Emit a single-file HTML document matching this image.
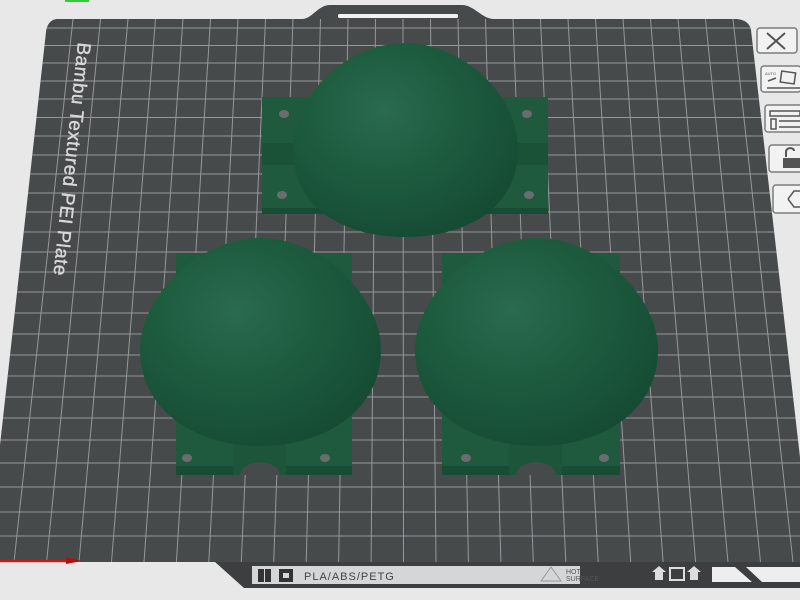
<!DOCTYPE html>
<html><head><meta charset="utf-8"><style>
html,body{margin:0;padding:0;width:800px;height:600px;overflow:hidden;background:#e8e8e8;}
svg{display:block}
text{font-family:"Liberation Sans",sans-serif;}
</style></head><body>
<svg width="800" height="600" viewBox="0 0 800 600" xmlns="http://www.w3.org/2000/svg">
<defs>
<clipPath id="pl"><path d="M58,19 L302,19 C312,19 318,5 330,5 L462,5 C474,5 482,19 494,19 L735,19 C745,19 750,24 751,30 L812,562 L0,562 L0,445 L46,32 C47,24 51,19 58,19 Z"/></clipPath>
<radialGradient id="dg" cx="0.4" cy="0.35" r="0.7">
<stop offset="0" stop-color="#2a6a4e"/><stop offset="0.5" stop-color="#1d5b3f"/><stop offset="1" stop-color="#154b33"/>
</radialGradient>
</defs>
<rect width="800" height="600" fill="#e8e8e8"/>
<rect x="65" y="0" width="24" height="2" fill="#3c3"/>
<g clip-path="url(#pl)">
<rect width="820" height="600" fill="#474a4b"/>
<g stroke="#95989a" stroke-width="1">
<line x1="0" y1="28" x2="820" y2="28"/><line x1="0" y1="45.5" x2="820" y2="45.5"/><line x1="0" y1="63" x2="820" y2="63"/><line x1="0" y1="81" x2="820" y2="81"/><line x1="0" y1="99" x2="820" y2="99"/><line x1="0" y1="117.5" x2="820" y2="117.5"/><line x1="0" y1="136" x2="820" y2="136"/><line x1="0" y1="155" x2="820" y2="155"/><line x1="0" y1="174" x2="820" y2="174"/><line x1="0" y1="193" x2="820" y2="193"/><line x1="0" y1="212" x2="820" y2="212"/><line x1="0" y1="232" x2="820" y2="232"/><line x1="0" y1="252" x2="820" y2="252"/><line x1="0" y1="272" x2="820" y2="272"/><line x1="0" y1="292" x2="820" y2="292"/><line x1="0" y1="313" x2="820" y2="313"/><line x1="0" y1="334" x2="820" y2="334"/><line x1="0" y1="355" x2="820" y2="355"/><line x1="0" y1="376" x2="820" y2="376"/><line x1="0" y1="397" x2="820" y2="397"/><line x1="0" y1="418" x2="820" y2="418"/><line x1="0" y1="440" x2="820" y2="440"/><line x1="0" y1="463" x2="820" y2="463"/><line x1="0" y1="487" x2="820" y2="487"/><line x1="0" y1="512" x2="820" y2="512"/><line x1="0" y1="536" x2="820" y2="536"/>
<line x1="73" y1="19" x2="14" y2="562"/><line x1="100.5" y1="19" x2="46.6" y2="562"/><line x1="128" y1="19" x2="79" y2="562"/><line x1="155.5" y1="19" x2="111.5" y2="562"/><line x1="183" y1="19" x2="144" y2="562"/><line x1="210.5" y1="19" x2="176.4" y2="562"/><line x1="238" y1="19" x2="208.8" y2="562"/><line x1="265.5" y1="19" x2="241.3" y2="562"/><line x1="293" y1="19" x2="273.7" y2="562"/><line x1="320.5" y1="19" x2="306.2" y2="562"/><line x1="348" y1="19" x2="338.6" y2="562"/><line x1="375.5" y1="19" x2="371.1" y2="562"/><line x1="403" y1="19" x2="403.5" y2="562"/><line x1="430.5" y1="19" x2="436" y2="562"/><line x1="458" y1="19" x2="468.4" y2="562"/><line x1="485.5" y1="19" x2="500.9" y2="562"/><line x1="513" y1="19" x2="533.3" y2="562"/><line x1="540.5" y1="19" x2="565.8" y2="562"/><line x1="568" y1="19" x2="598.2" y2="562"/><line x1="595.5" y1="19" x2="630.7" y2="562"/><line x1="623" y1="19" x2="663.1" y2="562"/><line x1="650.5" y1="19" x2="695.6" y2="562"/><line x1="678" y1="19" x2="728" y2="562"/><line x1="705.5" y1="19" x2="760.5" y2="562"/><line x1="733" y1="19" x2="793" y2="562"/>
</g>
</g>
<rect x="338" y="14" width="120" height="4" rx="1.5" fill="#f2f2f2"/>
<text transform="translate(78,42) rotate(96)" font-size="19" fill="#d8d8d8" stroke="#d8d8d8" stroke-width="0.4" letter-spacing="0.5">Bambu Textured PEI Plate</text>

<!-- top object -->
<rect x="262" y="97" width="286" height="117" fill="#1f5a3e"/>
<rect x="262" y="143" width="286" height="22" fill="#1a5238"/>
<rect x="262" y="208" width="286" height="6" fill="#174d35"/>
<ellipse cx="284" cy="114" rx="5" ry="4" fill="#6a6d6e"/><ellipse cx="527" cy="114" rx="5" ry="4" fill="#6a6d6e"/>
<ellipse cx="282" cy="195" rx="5" ry="4" fill="#6a6d6e"/><ellipse cx="529" cy="195" rx="5" ry="4" fill="#6a6d6e"/>
<path d="M293,150 C293,92 350,43 405,43 C460,43 518,92 518,150 C518,205 470,237 405,237 C340,237 293,205 293,150 Z" fill="url(#dg)"/>

<!-- left object -->
<rect x="176" y="253" width="176" height="222" fill="#1f5a3e"/>
<rect x="176" y="466" width="176" height="9" fill="#174d35"/>
<ellipse cx="187" cy="458" rx="5" ry="4" fill="#6a6d6e"/><ellipse cx="325" cy="458" rx="5" ry="4" fill="#6a6d6e"/>
<path d="M233,475 L233,437 L286,437 L286,475 Z" fill="#1c5539"/>
<path d="M240,475 C242,458 278,458 280,475 Z" fill="#474a4b"/>
<path d="M140,350 C140,295 200,238 260,238 C320,238 381,295 381,350 C381,410 325,446 260,446 C195,446 140,410 140,350 Z" fill="url(#dg)"/>

<!-- right object -->
<rect x="442" y="253" width="178" height="222" fill="#1f5a3e"/>
<rect x="442" y="466" width="178" height="9" fill="#174d35"/>
<ellipse cx="466" cy="458" rx="5" ry="4" fill="#6a6d6e"/><ellipse cx="604" cy="458" rx="5" ry="4" fill="#6a6d6e"/>
<path d="M509,475 L509,437 L562,437 L562,475 Z" fill="#1c5539"/>
<path d="M516,475 C518,458 554,458 556,475 Z" fill="#474a4b"/>
<path d="M415,350 C415,295 477,238 537,238 C597,238 658,295 658,350 C658,410 604,446 537,446 C470,446 415,410 415,350 Z" fill="url(#dg)"/>

<!-- red axis -->
<line x1="0" y1="561" x2="72" y2="561" stroke="#c81a1a" stroke-width="2.5"/>
<path d="M66,557 L82,561 L66,564 Z" fill="#b01010"/>

<!-- bottom bar -->
<path d="M215,562 L800,562 L800,588 L244,588 Z" fill="#3c3e3f"/>
<rect x="252" y="566" width="328" height="18" fill="#d4d6d7"/>
<rect x="258" y="569" width="13" height="13" fill="#333"/><rect x="264" y="569" width="1" height="13" fill="#d4d6d7"/>
<rect x="279" y="569" width="14" height="13" fill="#333"/><rect x="283" y="573" width="6" height="5" fill="#d4d6d7"/>
<text x="304" y="580" font-size="11" fill="#444" letter-spacing="1">PLA/ABS/PETG</text>
<path d="M541,581 L551,567 L561,581 Z" fill="none" stroke="#999" stroke-width="1"/>
<text x="566" y="574" font-size="7" fill="#555">HOT</text>
<text x="566" y="581" font-size="7" fill="#555">SURFACE</text>
<path d="M655,580 L655,572 L652,572 L659,566 L666,572 L663,572 L663,580 Z" fill="#ddd"/>
<rect x="670" y="568" width="14" height="12" fill="none" stroke="#ddd" stroke-width="2"/>
<path d="M690,580 L690,572 L687,572 L694,566 L701,572 L698,572 L698,580 Z" fill="#ddd"/>
<path d="M712,567 L735,567 L752,582 L712,582 Z" fill="#eee"/>
<path d="M746,567 L800,567 L800,582 L762,582 Z" fill="#eee"/>

<!-- right toolbar -->
<g fill="#f2f2f2" stroke="#7a7c7d" stroke-width="1.5">
<rect x="757" y="28" width="40" height="25" rx="3"/>
<rect x="761" y="66" width="40" height="26" rx="3"/>
<rect x="765" y="105" width="40" height="27" rx="3"/>
<rect x="769" y="145" width="40" height="27" rx="3"/>
<rect x="773" y="185" width="40" height="28" rx="3"/>
</g>
<path d="M767,33 L785,49 M785,33 L767,49" stroke="#555" stroke-width="2"/>
<rect x="781" y="72" width="14" height="11" transform="rotate(8 788 77)" fill="none" stroke="#555" stroke-width="1.5"/>
<text x="765" y="75" font-size="4" fill="#555">AUTO</text>
<path d="M768,81 L776,78 M767,88 L800,88" stroke="#555" stroke-width="1.5"/>
<rect x="770" y="111" width="30" height="5" fill="none" stroke="#555" stroke-width="1.5"/>
<rect x="771" y="119" width="5" height="10" fill="none" stroke="#555" stroke-width="1.5"/>
<path d="M779,121 L800,121 M779,127 L800,127" stroke="#555" stroke-width="1.5"/>
<rect x="783" y="158" width="17" height="10" fill="#555"/>
<path d="M786,157 L786,152 C786,147 794,147 794,151" fill="none" stroke="#555" stroke-width="2"/>
<path d="M788,199 L794,191 L800,191 M788,199 L794,207 L800,207" fill="none" stroke="#555" stroke-width="1.5"/>
</svg>
</body></html>
